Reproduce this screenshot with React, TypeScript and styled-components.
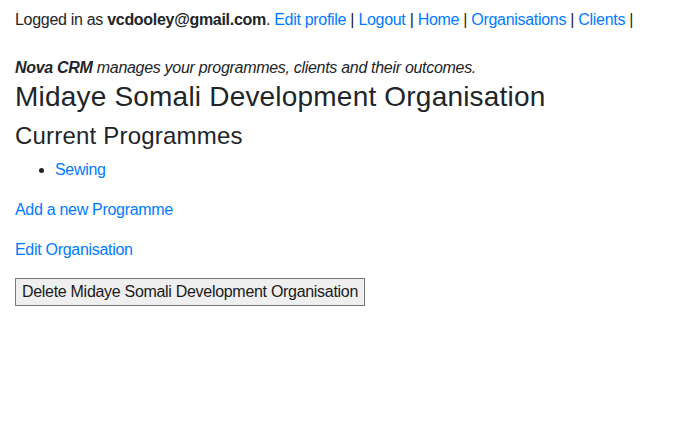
import React from "react";
import styled, { createGlobalStyle } from "styled-components";

const GlobalStyle = createGlobalStyle`
  html, body {
    margin: 0;
    padding: 0;
    background: #fff;
  }
  body {
    font-family: "Liberation Sans", Arial, Helvetica, sans-serif;
    font-size: 16px;
    line-height: 1.5;
    letter-spacing: -0.3px;
    color: #212529;
  }
`;

const Page = styled.div`
  padding: 8px 15px 0 15px;
`;

const Para = styled.p<{ $mb?: number }>`
  margin: 0 0 ${(p) => (p.$mb ?? 16)}px 0;
`;

const Link = styled.a`
  color: #007bff;
  text-decoration: none;
`;

const Heading = styled.h1<{ $size: number }>`
  margin: 0 0 8px 0;
  font-size: ${(p) => p.$size}px;
  font-weight: 500;
  line-height: 1.2;
  letter-spacing: 0.2px;
  color: #212529;
`;

const List = styled.ul`
  margin: 0 0 16px 0;
  padding-left: 40px;
`;

const DeleteButton = styled.button`
  font-family: inherit;
  font-size: 16px;
  line-height: 24px;
  letter-spacing: -0.3px;
  color: #1a1a1a;
  background: #efefef;
  border: 1px solid #767676;
  border-radius: 0;
  padding: 1px 6px;
  margin: 0;
`;

const navLinks = ["Edit profile", "Logout", "Home", "Organisations", "Clients"];

export default function App() {
  return (
    <>
      <GlobalStyle />
      <Page>
        <Para $mb={24}>
          Logged in as <b>vcdooley@gmail.com</b>.{" "}
          {navLinks.map((l) => (
            <React.Fragment key={l}>
              <Link href="#">{l}</Link> |{" "}
            </React.Fragment>
          ))}
        </Para>
        <Para $mb={0}>
          <i>
            <b>Nova CRM</b> manages your programmes, clients and their outcomes.
          </i>
        </Para>
        <Heading $size={28}>Midaye Somali Development Organisation</Heading>
        <Heading as="h2" $size={24}>
          Current Programmes
        </Heading>
        <List>
          <li>
            <Link href="#">Sewing</Link>
          </li>
        </List>
        <Para>
          <Link href="#">Add a new Programme</Link>
        </Para>
        <Para>
          <Link href="#">Edit Organisation</Link>
        </Para>
        <DeleteButton>Delete Midaye Somali Development Organisation</DeleteButton>
      </Page>
    </>
  );
}
